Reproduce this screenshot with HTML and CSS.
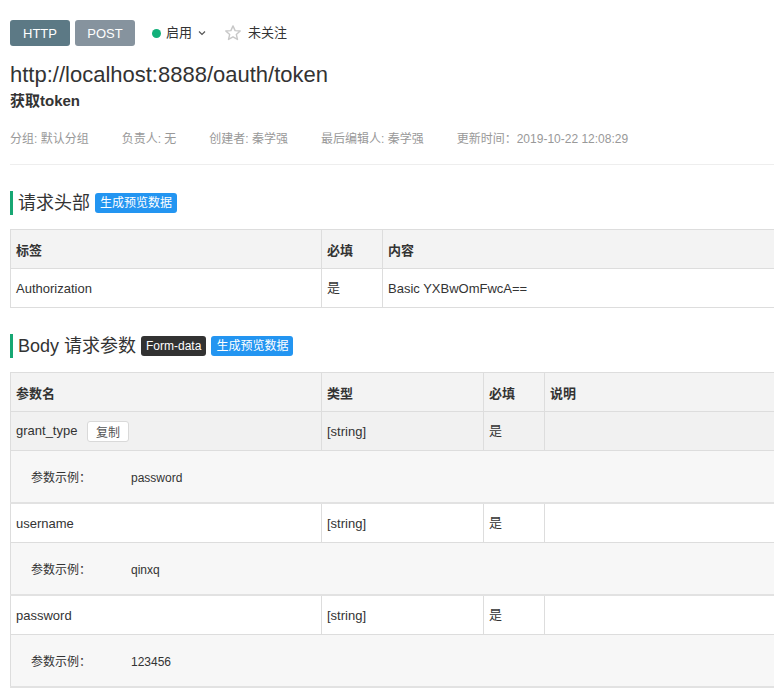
FILE: index.html
```html
<!DOCTYPE html>
<html lang="zh-CN">
<head>
  <meta charset="UTF-8">
  <meta name="viewport" content="width=device-width, initial-scale=1.0">
  <title>获取token</title>
  <link rel="stylesheet" href="styles.css">
</head>
<body>

  <div class="page">
    <!-- Top toolbar -->
    <div class="toolbar">
      <span class="tag tag-http">HTTP</span>
      <span class="tag tag-method">POST</span>
      <span class="status">
        <span class="dot"></span>启用
        <svg class="chevron" width="8" height="6" viewBox="0 0 8 6"><path d="M1 1.5 L4 4.5 L7 1.5" fill="none" stroke="#555" stroke-width="1.2"/></svg>
      </span>
      <span class="follow">
        <svg class="star" width="18" height="18" viewBox="0 0 24 24"><path d="M12 2.5 L14.8 8.8 L21.6 9.4 L16.4 13.9 L18 20.6 L12 17.1 L6 20.6 L7.6 13.9 L2.4 9.4 L9.2 8.8 Z" fill="none" stroke="#c8c8c8" stroke-width="1.9" stroke-linejoin="round"/></svg>
        未关注
      </span>
    </div>

    <div class="api-url">http://localhost:8888/oauth/token</div>
    <div class="api-name">获取token</div>

    <div class="meta">
      <span>分组: 默认分组</span>
      <span>负责人: 无</span>
      <span>创建者: 秦学强</span>
      <span>最后编辑人: 秦学强</span>
      <span>更新时间：2019-10-22 12:08:29</span>
    </div>

    <!-- Request headers -->
    <h3 class="section-title">请求头部 <span class="badge badge-blue">生成预览数据</span></h3>
    <table class="param-table">
      <colgroup>
        <col style="width: 311px">
        <col style="width: 61px">
        <col>
      </colgroup>
      <thead>
        <tr><th>标签</th><th>必填</th><th>内容</th></tr>
      </thead>
      <tbody>
        <tr><td>Authorization</td><td class="cjk">是</td><td>Basic YXBwOmFwcA==</td></tr>
      </tbody>
    </table>

    <!-- Body params -->
    <h3 class="section-title">Body 请求参数 <span class="badge badge-dark">Form-data</span><span class="badge badge-blue">生成预览数据</span></h3>
    <table class="param-table body-table">
      <colgroup>
        <col style="width: 311px">
        <col style="width: 162px">
        <col style="width: 61px">
        <col>
      </colgroup>
      <thead>
        <tr><th>参数名</th><th>类型</th><th>必填</th><th>说明</th></tr>
      </thead>
      <tbody>
        <tr class="row-active">
          <td>grant_type <button class="copy-btn">复制</button></td>
          <td>[string]</td><td class="cjk">是</td><td></td>
        </tr>
        <tr class="example-row">
          <td colspan="4"><span class="example-label">参数示例：</span>password</td>
        </tr>
        <tr>
          <td>username</td><td>[string]</td><td class="cjk">是</td><td></td>
        </tr>
        <tr class="example-row">
          <td colspan="4"><span class="example-label">参数示例：</span>qinxq</td>
        </tr>
        <tr>
          <td>password</td><td>[string]</td><td class="cjk">是</td><td></td>
        </tr>
        <tr class="example-row">
          <td colspan="4"><span class="example-label">参数示例：</span>123456</td>
        </tr>
      </tbody>
    </table>
  </div>

</body>
</html>
```

FILE: styles.css
```css
body {
  font-family: "Liberation Sans", Arial, "Noto Sans CJK SC", sans-serif;
  color: #333;
  background-color: #fff;
  margin: 0;
  overflow: hidden;
}

.page {
  width: 800px;
  padding: 20px 0 0 10px;
}

/* Toolbar */
.toolbar {
  display: flex;
  align-items: center;
  height: 26px;
  font-size: 13px;
}

.tag {
  display: inline-block;
  width: 60px;
  height: 26px;
  line-height: 27px;
  text-align: center;
  color: #fff;
  border-radius: 3px;
  margin-right: 5px;
}

.tag-http {
  background-color: #5c7985;
}

.tag-method {
  background-color: #86939e;
}

.status {
  display: flex;
  align-items: center;
  margin-left: 12px;
  color: #333;
  line-height: 26px;
}

.dot {
  width: 9px;
  height: 9px;
  border-radius: 50%;
  background-color: #12b07a;
  margin-right: 5px;
}

.chevron {
  margin-left: 6px;
}

.follow {
  display: flex;
  align-items: center;
  margin-left: 18px;
  line-height: 26px;
}

.star {
  margin-right: 6px;
}

/* Title block */
.api-url {
  font-size: 22px;
  margin-top: 15px;
  line-height: 28px;
}

.api-name {
  font-size: 15px;
  font-weight: bold;
  margin-top: 2px;
  line-height: 20px;
}

.meta {
  display: flex;
  font-size: 12px;
  color: #999;
  margin-top: 18px;
  padding-bottom: 18px;
  border-bottom: 1px solid #eee;
}

.meta span {
  margin-right: 33px;
}

/* Section titles */
.section-title {
  display: flex;
  align-items: center;
  font-size: 18px;
  font-weight: normal;
  line-height: 24px;
  margin: 26px 0 14px 0;
  padding-left: 5px;
  border-left: 3px solid #17a773;
}

.badge {
  display: inline-block;
  font-size: 12px;
  line-height: 20px;
  height: 20px;
  padding: 0 5px;
  color: #fff;
  border-radius: 3px;
  margin-left: 5px;
}

.badge-blue {
  background-color: #2395f1;
}

.badge-dark {
  background-color: #323232;
}

/* Tables */
.param-table {
  width: 100%;
  border-collapse: collapse;
  table-layout: fixed;
  font-size: 13px;
  border: 1px solid #ddd;
}

.param-table th,
.param-table td {
  border: 1px solid #ddd;
  height: 38px;
  padding: 0 5px;
  text-align: left;
  vertical-align: middle;
}

.param-table th {
  background-color: #f3f3f3;
  font-weight: bold;
}

.param-table td.cjk {
  font-family: "Noto Sans CJK SC", sans-serif;
  line-height: 16px;
  height: 35px;
  padding-bottom: 3px;
}

.row-active td {
  background-color: #f1f1f1;
}

.copy-btn {
  font-family: inherit;
  font-size: 12px;
  color: #555;
  background: #fff;
  border: 1px solid #d9d9d9;
  border-radius: 3px;
  height: 21px;
  padding: 0 8px;
  margin-left: 6px;
  vertical-align: middle;
}

.example-row td {
  background-color: #f7f7f7;
  height: 51px;
  padding: 0 0 0 20px;
  vertical-align: middle;
  font-size: 12px;
  border-bottom: 2px solid #e2e2e2;
}

.example-label {
  display: inline-block;
  width: 100px;
}
```
